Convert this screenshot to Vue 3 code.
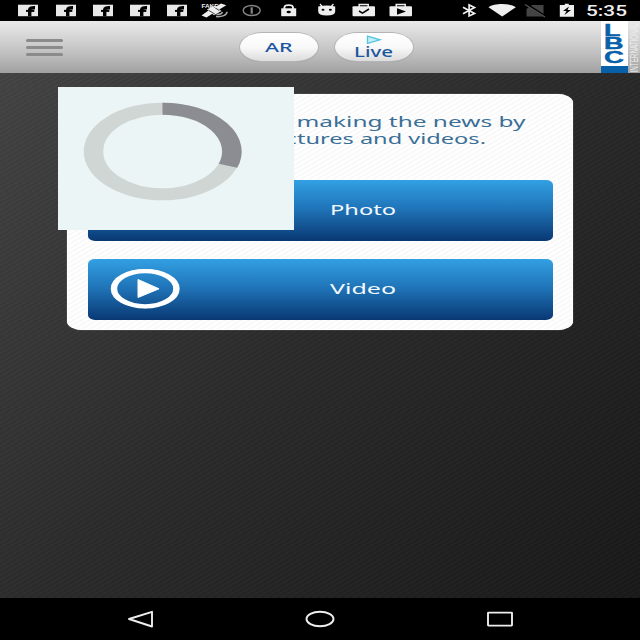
<script setup>
const notifications = ['fb', 'fb', 'fb', 'fb', 'fb', 'sat', 'info', 'lock', 'droid', 'check', 'play']
const system = ['bluetooth', 'wifi', 'nosim', 'battery']
</script>

<template>
  <div class="screen">
    <div class="status">
      <div class="notes">
        <svg v-for="(n, i) in notifications" :key="i" class="note" viewBox="0 0 37.3 21" preserveAspectRatio="none">
          <g v-if="n === 'fb'">
            <path fill="#e8e8e8" d="M9 4.700h20v11.500H9z" />
            <path fill="none" stroke="#000" stroke-width="3.400" d="M20.700 16.300V9.800Q20.700 7.500 26 7.700" />
            <path stroke="#000" stroke-width="2" d="M17 10.900H25.300" />
          </g>
          <g v-else-if="n === 'sat'">
            <path fill="#eee" d="M5.500 15.500l7-5 5 2.500-7 4.500zM19 7.200l6-3.700 5.300 1.700-7 4.300z" />
            <path fill="#eee" d="M11 9.500l7-4 7.500 5.500-7.500 4.200z" />
            <path fill="none" stroke="#000" stroke-width=".7" d="M12.500 10.200l6.500 4M17.500 6.700l6 4" />
            <path fill="none" stroke="#aaa" stroke-width="1.500" d="M20 16.600c6 .5 11-1.500 11-4.800M20.500 14.500q5.500 0 6-2.500" />
            <text x="5.500" y="7.600" class="fake" textLength="17" lengthAdjust="spacingAndGlyphs">FAKE</text>
          </g>
          <g v-else-if="n === 'info'" fill="none" stroke="#858585">
            <ellipse cx="18.700" cy="10.500" rx="8.500" ry="5" stroke-width="1.400" />
            <path stroke-width="2.200" d="M18.700 7.300v6.400" />
          </g>
          <g v-else-if="n === 'lock'">
            <path fill="#eee" d="M11.200 8.300h15v7.900h-15z" />
            <path fill="none" stroke="#eee" stroke-width="1.900" d="M14.400 9.500V7.500c0-3.200 8.600-3.200 8.600 0V9.500" />
            <ellipse cx="18.700" cy="12" rx="2.200" ry="1.300" fill="#000" />
          </g>
          <g v-else-if="n === 'droid'">
            <path fill="#eee" d="M10.200 6.500q8.500-2 17 0v5q0 4-8.500 4t-8.500-4z" />
            <path stroke="#eee" stroke-width="1.200" d="M12 4l2.500 3M25.400 4l-2.500 3" />
            <ellipse cx="15" cy="9.700" rx="1.500" ry="1" />
            <ellipse cx="22.400" cy="9.700" rx="1.500" ry="1" />
          </g>
          <g v-else>
            <rect x="7.500" y="6.300" width="22.500" height="9.900" rx="1" fill="#eee" />
            <path fill="none" stroke="#eee" stroke-width="1.500" d="M14.200 7V4.500h9V7" />
            <path v-if="n === 'check'" fill="none" stroke="#000" stroke-width="1.500" d="M14 11l3.500 2.200L24 9" />
            <path v-else d="M15 8.300l9 3.200-9 3.200z" />
          </g>
        </svg>
      </div>
      <div class="sys">
        <svg v-for="s in system" :key="s" class="sysicon" viewBox="0 0 32.5 21">
          <path v-if="s === 'bluetooth'" fill="none" stroke="#eee" stroke-width="1.700" d="M9 7.300l11.500 6.200-5.400 2.500V4.900l5.400 2.600L9 13.700" />
          <path v-else-if="s === 'wifi'" fill="#eee" d="M1.500 7.200C7 3 23 3 28.800 7.200L15.200 16.500z" />
          <g v-else-if="s === 'nosim'">
            <path fill="#444" d="M13 5h11.500v11.500H7.500V9z" />
            <path stroke="#000" stroke-width="2.500" d="M7 4l20 13" />
            <path stroke="#555" stroke-width="1.300" d="M6 4.500l20 12.500" />
          </g>
          <g v-else>
            <path fill="#eee" d="M7.800 5h5V3.800h4V5H22v11.800H7.800z" />
            <path d="M17 6.500l-6 4.500h3.500l-2 4 6.500-5h-3.500z" />
          </g>
        </svg>
        <svg class="clock" viewBox="0 0 43 21"><text x="0" y="15.500" textLength="41" lengthAdjust="spacingAndGlyphs">5:35</text></svg>
      </div>
    </div>

    <header class="bar">
      <div class="menu"><i /><i /><i /></div>
      <div class="pills">
        <button class="pill">
          <svg width="78" height="28"><text x="25" y="19" class="ar" textLength="27.500" lengthAdjust="spacingAndGlyphs">AR</text></svg>
        </button>
        <button class="pill">
          <svg width="78" height="28">
            <path d="M32.500 3.200v7.200L45 6.800z" fill="#c3edf7" stroke="#52c4de" stroke-width="1.300" />
            <text x="19" y="24" class="live" textLength="39" lengthAdjust="spacingAndGlyphs">Live</text>
          </svg>
        </button>
      </div>
      <svg class="logo" viewBox="0 0 39 52">
        <path fill="#fff" d="M0 0h27v52H0z" />
        <path fill="#0860a8" d="M0 45h27v7H0z" />
        <g class="lbc">
          <text x="3" y="14.500" textLength="16.500" lengthAdjust="spacingAndGlyphs">L</text>
          <text x="3" y="28.300" textLength="19.500" lengthAdjust="spacingAndGlyphs">B</text>
          <text x="3" y="41.800" textLength="20" lengthAdjust="spacingAndGlyphs">C</text>
        </g>
        <text class="intl" transform="translate(36.800 51.500) rotate(-90)" textLength="50" lengthAdjust="spacingAndGlyphs">INTERNATIONAL</text>
      </svg>
    </header>

    <main class="content">
      <section class="card">
        <svg class="message" viewBox="0 0 465 70">
          <text x="208.500" y="16.800" textLength="229" lengthAdjust="spacingAndGlyphs">making the news by</text>
          <text x="177" y="33.800" textLength="221" lengthAdjust="spacingAndGlyphs">pictures and videos.</text>
        </svg>
        <button class="action">
          <svg width="465" height="61"><text x="242" y="35" textLength="66" lengthAdjust="spacingAndGlyphs">Photo</text></svg>
        </button>
        <button class="action">
          <svg width="465" height="61">
            <ellipse cx="57.200" cy="29.700" rx="32.700" ry="18" fill="none" stroke="#fff" stroke-width="3.500" />
            <ellipse cx="57.200" cy="29.700" rx="30" ry="17.500" fill="none" stroke="#fff" stroke-width="4" />
            <path fill="#fff" stroke="#fff" stroke-linejoin="round" d="M50 20.500v18L71 29.800z" />
            <text x="242" y="35" textLength="66" lengthAdjust="spacingAndGlyphs">Video</text>
          </svg>
        </button>
      </section>
      <div class="loader">
        <svg width="236" height="143">
          <g transform="translate(104.500 64.500) scale(1 .62)" fill="none" stroke-width="19.500">
            <circle r="69" stroke="#d0d6d4" />
            <path d="M0-69A69 69 0 0 1 65.500 23" stroke="#8b8d92" />
          </g>
        </svg>
      </div>
    </main>

    <nav class="nav">
      <svg viewBox="0 0 180 42"><path d="M79 21l23-7.200v14.700z" /></svg>
      <svg viewBox="0 0 180 42"><ellipse cx="90" cy="21" rx="13.500" ry="7.300" /></svg>
      <svg viewBox="0 0 180 42"><rect x="78" y="14.600" width="24" height="13" rx=".5" /></svg>
    </nav>
  </div>
</template>

<style>
body { margin: 0; overflow: hidden; }
</style>

<style scoped>
.screen { width: 640px; height: 640px; display: flex; flex-direction: column; overflow: hidden; font-family: "Noto Sans", sans-serif; }
svg { display: block; }
button { border: 0; padding: 0; font: inherit; }
.status { height: 21px; background: #000; display: flex; justify-content: space-between; padding: 0 11px 0 9.3px; }
.notes, .sys { display: flex; }
.note { width: 37.3px; height: 21px; }
.fake { font: bold 6px "Liberation Sans", sans-serif; fill: #eee; }
.sysicon { width: 32.5px; height: 21px; }
.clock { width: 43px; height: 21px; margin-left: 2px; font-family: Roboto, sans-serif; font-size: 14px; font-weight: 500; fill: #eee; }
.bar { height: 52px; display: flex; background: linear-gradient(#e9e9e9, #c9c9c9 50%, #a1a1a1); }
.menu { width: 37px; margin-left: 26px; display: flex; flex-direction: column; gap: 4.200px; padding-top: 17.500px; box-sizing: border-box; }
.menu i { height: 3px; border-radius: 2px; background: #8b8b8b; flex: none; }
.pills { display: flex; gap: 17px; padding-top: 12px; margin-left: 177px; }
.pill { width: 78px; height: 28px; border-radius: 23px / 14px; background: linear-gradient(#fff, #f9f9f9 50%, #dcdcdc); box-shadow: 0 0 0 1px #b5b5b5, 0 1px 1px #9b9b9b; }
.pill text { fill: #1d57a0; }
.ar { font-size: 13.300px; font-weight: 500; }
.live { font-size: 13.600px; font-weight: 500; }
.logo { width: 39px; height: 52px; margin-left: auto; }
.lbc { font: bold 16.500px "Liberation Sans", sans-serif; fill: #0860a8; stroke: #0860a8; stroke-width: .4; }
.intl { font: 11px "Liberation Sans", sans-serif; fill: #eee; }
.content { flex: 1; position: relative; padding: 21px 67px; background: repeating-linear-gradient(150deg, transparent 0 2px, rgba(255, 255, 255, .018) 2px 4px), linear-gradient(135deg, #424242, #2a2a2a 48%, #181818); }
.card { height: 236px; box-sizing: border-box; padding: 16px 20px 0 20.500px; display: flex; flex-direction: column; border-radius: 15px / 9px; background: repeating-linear-gradient(150deg, #fff 0 2px, #f9f9f9 2px 4px); box-shadow: inset 0 0 0 1px #fff, 0 0 1px #ccc; }
.message { width: 465px; height: 70px; flex: none; fill: #3b6f98; font-size: 13.700px; }
.action { width: 465px; height: 61px; border-radius: 7px / 5px; background: linear-gradient(#32a0e3, #1f73b7 48%, #093873); flex: none; }
.action + .action { margin-top: 18px; }
.action text { fill: #f5faff; font-size: 13.500px; }
.loader { position: absolute; left: 58px; top: 14px; width: 236px; height: 143px; background: #ecf5f5; }
.nav { height: 42px; background: #000; display: flex; justify-content: center; }
.nav svg { width: 180px; height: 42px; fill: none; stroke: #eee; stroke-width: 1.900; stroke-linejoin: round; }
</style>
